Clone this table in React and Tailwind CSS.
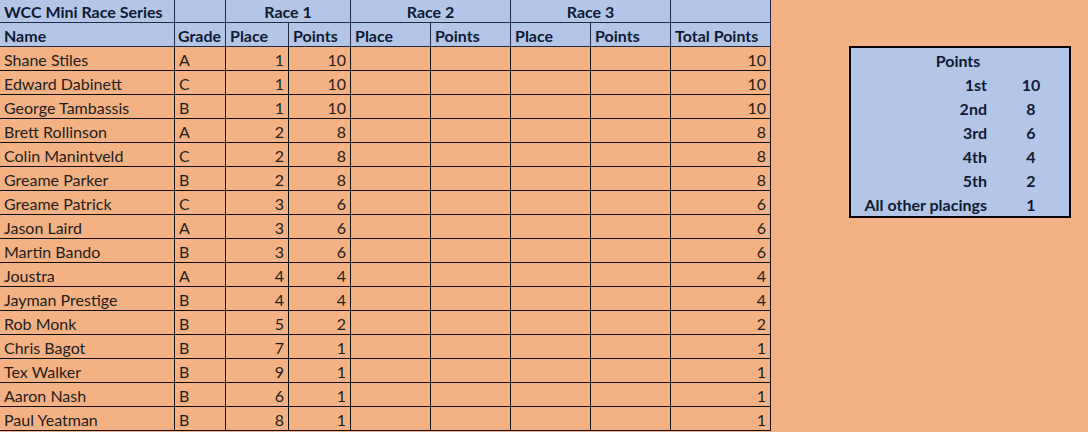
import React from "react";

const rows = [
  ["Shane Stiles", "A", 1, 10, 10],
  ["Edward Dabinett", "C", 1, 10, 10],
  ["George Tambassis", "B", 1, 10, 10],
  ["Brett Rollinson", "A", 2, 8, 8],
  ["Colin Manintveld", "C", 2, 8, 8],
  ["Greame Parker", "B", 2, 8, 8],
  ["Greame Patrick", "C", 3, 6, 6],
  ["Jason Laird", "A", 3, 6, 6],
  ["Martin Bando", "B", 3, 6, 6],
  ["Joustra", "A", 4, 4, 4],
  ["Jayman Prestige", "B", 4, 4, 4],
  ["Rob Monk", "B", 5, 2, 2],
  ["Chris Bagot", "B", 7, 1, 1],
  ["Tex Walker", "B", 9, 1, 1],
  ["Aaron Nash", "B", 6, 1, 1],
  ["Paul Yeatman", "B", 8, 1, 1],
];

const pointsKey = [
  ["1st", 10],
  ["2nd", 8],
  ["3rd", 6],
  ["4th", 4],
  ["5th", 2],
  ["All other placings", 1],
];

const hd = "border border-[#1f2a44] px-[4px] pt-[2px] text-left font-bold text-[#0f1a33]";
const td = "border border-[#111] px-[4px] pt-[2px] text-[#1e1e1e]";

export default function App() {
  return (
    <div className="flex items-start w-full h-[432px] overflow-hidden bg-[#f4b183] font-['Lato',sans-serif] text-[16px] leading-none">
      {/* results sheet */}
      <table className="table-fixed border-collapse w-[770px] -mt-px -ml-px">
        <colgroup>
          <col className="w-[175px]" />
          <col className="w-[51px]" />
          <col className="w-[63px]" />
          <col className="w-[62px]" />
          <col className="w-[80px]" />
          <col className="w-[80px]" />
          <col className="w-[80px]" />
          <col className="w-[80px]" />
          <col className="w-[100px]" />
        </colgroup>
        <thead className="bg-[#b4c6e7]">
          <tr className="h-[23px]">
            <th className={hd + " whitespace-nowrap"}>WCC Mini Race Series</th>
            <th className={hd}></th>
            <th colSpan={2} className={hd + " !text-center"}>Race 1</th>
            <th colSpan={2} className={hd + " !text-center"}>Race 2</th>
            <th colSpan={2} className={hd + " !text-center"}>Race 3</th>
            <th className={hd}></th>
          </tr>
          <tr className="h-[24px]">
            <th className={hd}>Name</th>
            <th className={hd + " !px-[3px]"}>Grade</th>
            <th className={hd}>Place</th>
            <th className={hd}>Points</th>
            <th className={hd}>Place</th>
            <th className={hd}>Points</th>
            <th className={hd}>Place</th>
            <th className={hd}>Points</th>
            <th className={hd + " whitespace-nowrap"}>Total Points</th>
          </tr>
        </thead>
        <tbody>
          {rows.map(([name, grade, place, pts, total], i) => (
            <tr key={i} className="h-[24px]">
              <td className={td}>{name}</td>
              <td className={td}>{grade}</td>
              <td className={td + " text-right"}>{place}</td>
              <td className={td + " text-right"}>{pts}</td>
              <td className={td}></td>
              <td className={td}></td>
              <td className={td}></td>
              <td className={td}></td>
              <td className={td + " text-right"}>{total}</td>
            </tr>
          ))}
        </tbody>
      </table>

      {/* points key */}
      <div className="ml-[78px] mt-[46px] w-[222px] border-2 border-black bg-[#b4c6e7] font-bold text-[#0f1a33]">
        <div className="h-[24px] flex items-center justify-center pt-[2px] pr-[4px]">Points</div>
        {pointsKey.map(([label, val]) => (
          <div key={label} className="h-[24px] flex items-center pt-[2px]">
            <div className="w-[142px] text-right pr-[6px] whitespace-nowrap">{label}</div>
            <div className="flex-1 text-center">{val}</div>
          </div>
        ))}
      </div>
    </div>
  );
}
